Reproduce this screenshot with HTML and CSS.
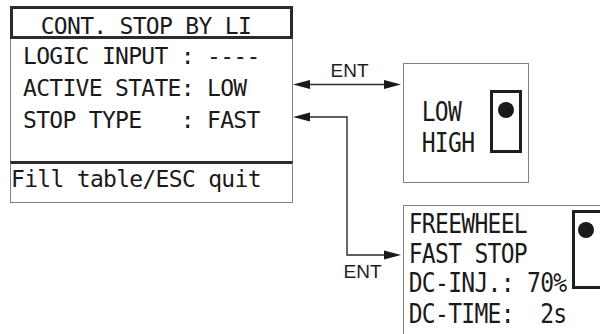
FILE: index.html
```html
<!DOCTYPE html>
<html>
<head>
<meta charset="utf-8">
<link rel="stylesheet" href="styles.css">
</head>
<body>
<div class="canvas">
  <div class="main lcd">
    <div class="main-title ln">CONT. STOP BY LI</div>
    <div class="main-body">
      <div class="ln">LOGIC INPUT : ----</div>
      <div class="ln">ACTIVE STATE: LOW</div>
      <div class="ln">STOP TYPE   : FAST</div>
    </div>
    <div class="main-foot ln">Fill table/ESC quit</div>
  </div>

  <svg class="wires" width="600" height="334" viewBox="0 0 600 334">
    <g stroke="#2a2a2a" stroke-width="1.4" fill="none">
      <line x1="305" y1="84.5" x2="390" y2="84.5"/>
      <polyline points="305,117 347,117 347,255 390,255"/>
    </g>
    <g fill="#1a1a1a">
      <polygon points="293,84.5 310,80 310,89"/>
      <polygon points="401,84.5 384,80 384,89"/>
      <polygon points="293,117 310,112.5 310,121.5"/>
      <polygon points="401,255 384,250.5 384,259.5"/>
    </g>
  </svg>

  <div class="ent ent-top">ENT</div>
  <div class="ent ent-bottom">ENT</div>

  <div class="popup popup-low lcd">
    <div class="tall-col col-low">
      <div class="ln">LOW</div>
      <div class="ln">HIGH</div>
    </div>
    <div class="ind ind-low"><div class="dot"></div></div>
  </div>

  <div class="popup popup-stop lcd">
    <div class="tall-col col-stop">
      <div class="ln">FREEWHEEL</div>
      <div class="ln">FAST STOP</div>
      <div class="ln">DC-INJ.: 70%</div>
      <div class="ln">DC-TIME:  2s</div>
    </div>
    <div class="ind ind-stop"><div class="dot"></div></div>
  </div>
</div>
</body>
</html>
```
FILE: styles.css
```css
html, body {
  margin: 0;
  padding: 0;
  background: #ffffff;
  overflow: hidden;
}

.canvas {
  position: relative;
  width: 600px;
  height: 334px;
  overflow: hidden;
  color: #1a1a1a;
}

.lcd {
  font-family: "DejaVu Sans Mono", monospace;
  font-size: 23px;
  letter-spacing: -0.7px;
}

.ln {
  white-space: pre;
}

/* main menu panel */
.main {
  position: absolute;
  left: 10px;
  top: 6px;
  width: 283px;
  height: 197px;
  display: flex;
  flex-direction: column;
}

.main-title {
  box-sizing: border-box;
  height: 33px;
  border: 3px solid #2b2b2b;
  padding: 4.3px 0 0 27.7px;
  line-height: 27px;
}

.main-body {
  flex: 1;
  border-left: 1px solid #808080;
  border-right: 1px solid #808080;
  padding: 1px 0 0 12px;
  line-height: 32px;
}

.main-foot {
  box-sizing: border-box;
  height: 42px;
  border: 1px solid #808080;
  border-top: 3px solid #2b2b2b;
  line-height: 30px;
  padding-left: 0;
}

/* connectors */
.wires {
  position: absolute;
  left: 0;
  top: 0;
}

.ent {
  position: absolute;
  font-family: "Liberation Sans", Arial, sans-serif;
  font-size: 19px;
  line-height: 19px;
  color: #1e1e1e;
}

.ent-top {
  left: 330.5px;
  top: 60.8px;
}

.ent-bottom {
  left: 343.5px;
  top: 261.8px;
}

/* popups */
.popup {
  position: absolute;
  box-sizing: border-box;
  border: 1px solid #808080;
  display: flex;
  align-items: flex-start;
}

.popup-low {
  left: 403px;
  top: 63px;
  width: 126px;
  height: 120px;
  padding: 26px 0 0 17.7px;
}

.popup-stop {
  left: 403px;
  top: 205px;
  width: 220px;
  height: 140px;
  padding: 0 0 0 4.7px;
}

.tall-col {
  transform: scaleY(1.19);
  transform-origin: top left;
}

.col-low {
  width: 53px;
  margin-top: 7.3px;
  line-height: 25.5px;
}

.col-stop {
  width: 158px;
  margin-top: 2.5px;
  line-height: 25.2px;
}

.ind {
  box-sizing: border-box;
  border: 3px solid #1e1e1e;
  display: flex;
  padding-top: 9px;
}

.ind-low {
  width: 32px;
  height: 63px;
  margin-left: 15.3px;
  justify-content: center;
}

.ind-stop {
  width: 40px;
  height: 79px;
  margin-top: 4px;
  margin-left: 5.3px;
  padding-left: 3px;
  justify-content: flex-start;
}

.dot {
  width: 16px;
  height: 16px;
  border-radius: 50%;
  background: #1a1a1a;
}
```
